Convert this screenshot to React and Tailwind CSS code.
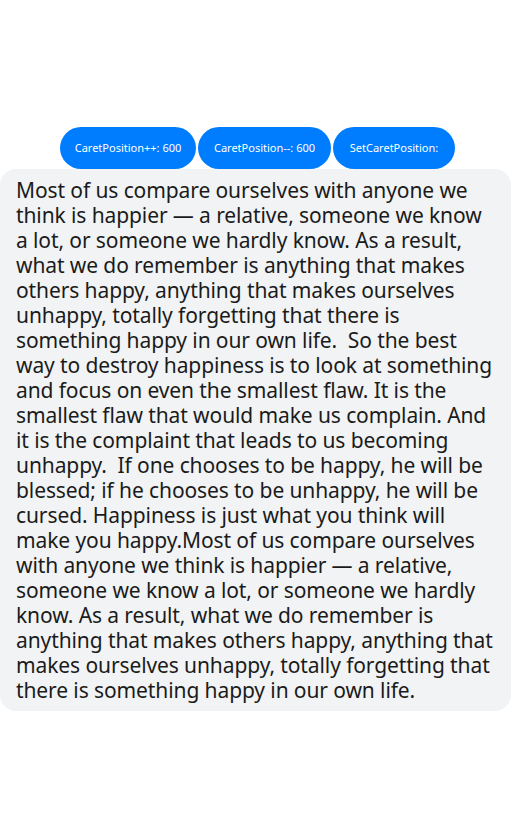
import React from 'react';

const lines = [
  'Most of us compare ourselves with anyone we',
  'think is happier \u2014 a relative, someone we know',
  'a lot, or someone we hardly know. As a result,',
  'what we do remember is anything that makes',
  'others happy, anything that makes ourselves',
  'unhappy, totally forgetting that there is',
  'something happy in our own life.\u00a0 So the best',
  'way to destroy happiness is to look at something',
  'and focus on even the smallest flaw. It is the',
  'smallest flaw that would make us complain. And',
  'it is the complaint that leads to us becoming',
  'unhappy.\u00a0 If one chooses to be happy, he will be',
  'blessed; if he chooses to be unhappy, he will be',
  'cursed. Happiness is just what you think will',
  'make you happy.Most of us compare ourselves',
  'with anyone we think is happier \u2014 a relative,',
  'someone we know a lot, or someone we hardly',
  'know. As a result, what we do remember is',
  'anything that makes others happy, anything that',
  'makes ourselves unhappy, totally forgetting that',
  'there is something happy in our own life.',
];

const buttons = [
  { label: 'CaretPosition++: 600', w: 'w-[136px]' },
  { label: 'CaretPosition--: 600', w: 'w-[133px]' },
  { label: 'SetCaretPosition:', w: 'w-[122px]' },
];

export default function App() {
  return (
    <div className="min-h-[822px] bg-white pt-[127px] font-['Noto_Sans',sans-serif]">
      <div className="flex justify-center gap-[2px] pl-[4px]">
        {buttons.map(b => (
          <button key={b.label} className={`${b.w} h-[42px] rounded-full bg-[#007dff] text-white text-[11px]`}>
            {b.label}
          </button>
        ))}
      </div>
      <div className="bg-[#f1f3f5] rounded-2xl px-[16px] pt-[9px] pb-[8px] text-[#1b1b1b] text-[21px] leading-[25px] tracking-[-0.1px]">
        {lines.map((l, i) => (
          <div key={i} className="whitespace-pre">{l}</div>
        ))}
      </div>
    </div>
  );
}
